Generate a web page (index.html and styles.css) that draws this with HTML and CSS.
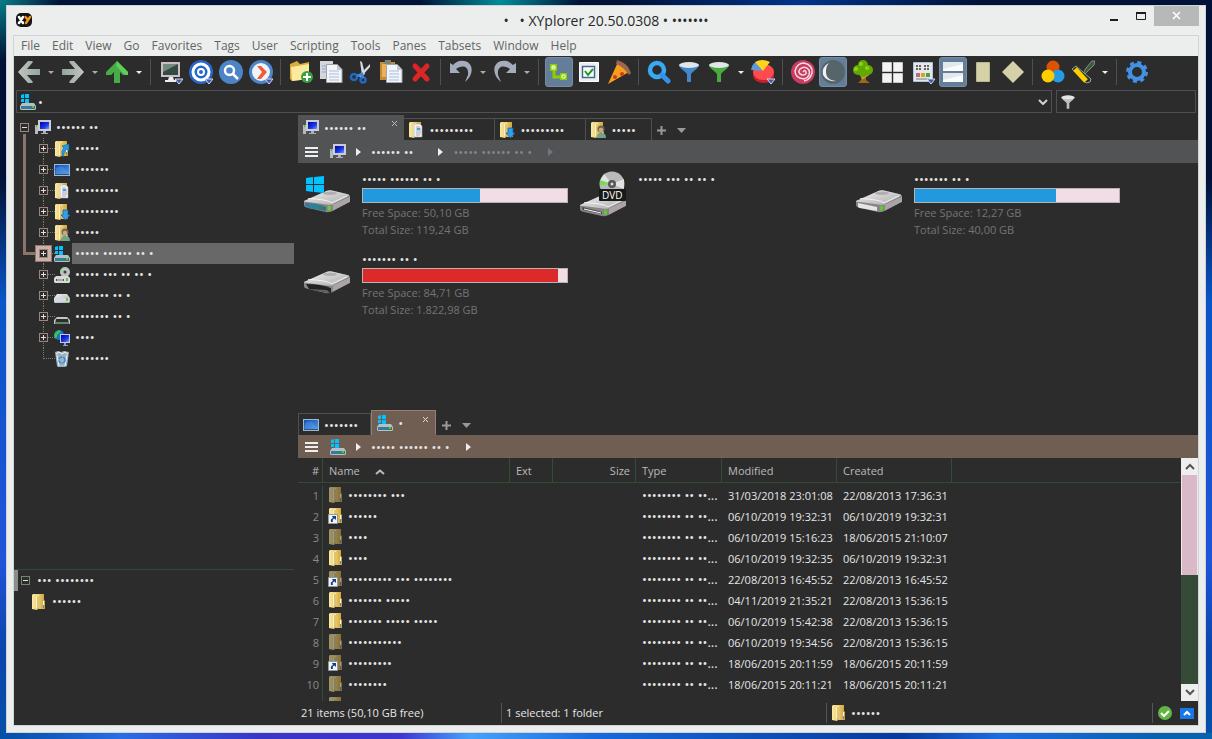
FILE: index.html
```html
<!DOCTYPE html>
<html lang="en">
<head>
    <meta charset="UTF-8">
    <meta name="viewport" content="width=device-width, initial-scale=1.0">
    <title>XYplorer 20.50.0308</title>
    <link rel="stylesheet" href="styles.css">
</head>
<body>
    <!-- icon set -->
    <svg class="defs" width="0" height="0" aria-hidden="true">
        <defs>
            <linearGradient id="gFolder" x1="0" x2="1"><stop offset="0" stop-color="#fbe9a4"/><stop offset=".5" stop-color="#e9cb6c"/><stop offset="1" stop-color="#cf9f38"/></linearGradient>
            <linearGradient id="gScreen" x1="0" y1="0" x2="1" y2="1"><stop offset="0" stop-color="#0000a0"/><stop offset=".6" stop-color="#1a3be8"/><stop offset="1" stop-color="#6aa0ff"/></linearGradient>
            <linearGradient id="gDesk" x1="0" y1="0" x2="1" y2="1"><stop offset="0" stop-color="#174bb0"/><stop offset="1" stop-color="#4f9bea"/></linearGradient>
            <linearGradient id="gMetal" x1="0" y1="0" x2="1" y2="1"><stop offset="0" stop-color="#f4f4f4"/><stop offset="1" stop-color="#a9a9ab"/></linearGradient>
            <linearGradient id="gTeal" x1="0" x2="1"><stop offset="0" stop-color="#3a78a0"/><stop offset=".6" stop-color="#2b8294"/><stop offset="1" stop-color="#3a6f70"/></linearGradient>
            <linearGradient id="gArrow" x1="0" x2="1"><stop offset="0" stop-color="#c4c4c4"/><stop offset="1" stop-color="#8fa899"/></linearGradient>
        </defs>
        <symbol id="folder" viewBox="0 0 16 16"><path d="M1 1l1-1h11v6l1 1v8h-7l-1 1-5-1z" fill="url(#gFolder)"/><path d="M5 2l3-1v12l-2 2-1-2z" fill="#fff3bd"/><path d="M7 2v13" stroke="#bb9238"/><rect x="12" y="7" width="1" height="4" fill="#fff"/><rect x="12" y="11" width="1" height="3" fill="#3e8fd0"/></symbol>
        <symbol id="pc" viewBox="0 0 16 16"><path d="M0 5h3v9H0z" fill="#b9b9b9"/><path d="M1 5h1v2H1z" fill="#2fd020"/><path d="M3 0h13v11H3z" fill="#cfcbd6"/><path d="M5 2h9v7H5z" fill="url(#gScreen)"/><path d="M8 11h3v2h2v1H6v-1h2z" fill="#aeaeb4"/></symbol>
        <symbol id="quick" viewBox="0 0 16 16"><use href="#folder"/><path d="M8 5l7-2v7l-2-2c-2 2-3 4-4 8-2-4-1-7 1-9z" fill="#1f9ae4" stroke="#0b63b0" stroke-width=".6"/></symbol>
        <symbol id="desktop" viewBox="0 0 16 16"><path d="M0 2h16v12H0z" fill="#9fb6cf"/><path d="M1 3h14v9H1z" fill="url(#gDesk)"/><path d="M2 6q6-4 9 1t4 3v2H2z" fill="#5fa7f2" opacity=".35"/><path d="M1 12h14v1H1z" fill="#34536e"/></symbol>
        <symbol id="docs" viewBox="0 0 16 16"><use href="#folder"/><path d="M6 2h6l2 2v11H6z" fill="#f1f3f6" stroke="#a8a8a8" stroke-width=".6"/><path d="M8 5h4M8 7h5M8 9h5M8 11h5M8 13h4" stroke="#a494a5" stroke-width=".8"/><rect x="9" y="6" width="3" height="2" fill="#43a4dd"/></symbol>
        <symbol id="down" viewBox="0 0 16 16"><use href="#folder"/><path d="M9 6h5v5h2l-4.500 5L7 11h2z" fill="#369ee5" stroke="#1265ad" stroke-width=".8"/></symbol>
        <symbol id="users" viewBox="0 0 16 16"><use href="#folder"/><path d="M7 16q0-5 3-5h2q4 0 4 5z" fill="#6fa58b"/><circle cx="11" cy="7" r="3.500" fill="#73654d"/><circle cx="11" cy="8" r="2.300" fill="#c9a885"/></symbol>
        <symbol id="drive" viewBox="0 0 16 16"><path d="M3 6h10l3 4v4l-1 1H1l-1-1v-4z" fill="url(#gMetal)"/><path d="M1 10h14v4H1z" fill="#cfd8e4"/><path d="M12 10h2v3h-2z" fill="#6fcb2d"/></symbol>
        <symbol id="removable" viewBox="0 0 16 16"><path d="M3 8h10l3 3v4H0v-4z" fill="#c4c4c2"/><path d="M2 10h12l1 5H1z" fill="#263327"/><path d="M1 13h14v2H1z" fill="#69836a"/></symbol>
        <symbol id="windrive" viewBox="0 0 16 16"><path d="M2 9h12l2 3v3l-1 1H1l-1-1v-3z" fill="#b9bec2"/><path d="M1 12h14v3H1z" fill="url(#gTeal)"/><path d="M12 12h2v2h-2z" fill="#4fcb2d"/><path d="M1 1l3-1v4H1zM5 0h4v4H5zM1 5h3v3H1zM5 5h4v4H5z" fill="#00c3ff"/></symbol>
        <symbol id="dvd" viewBox="0 0 16 16"><circle cx="11" cy="5" r="5" fill="#bfc3c0"/><path d="M11 5L7 2 6 5z" fill="#93d69b"/><circle cx="11" cy="5" r="1.500" fill="#3b3b3b"/><path d="M2 9h12l2 2v4l-1 1H1l-1-1v-4z" fill="#d8d8da"/><path d="M2 12h8v2H2z" fill="#555"/><path d="M3 12.500h6v1H3z" fill="#fff"/><path d="M12 11h2v3h-2z" fill="#5ec72b"/></symbol>
        <symbol id="network" viewBox="0 0 16 16"><circle cx="5" cy="5" r="5" fill="#1673d8"/><path d="M1 3l4-3 2 2-3 2-2 5-2-3zM6 6l3-2 1 2-3 3z" fill="#3ec832"/><path d="M6 4h10v9H6z" fill="#c7cae0"/><path d="M7 5h8v7H7z" fill="url(#gScreen)"/><path d="M10 13h2v2h2v1H9v-1h1z" fill="#8f9fc0"/></symbol>
        <symbol id="bin" viewBox="0 0 16 16"><path d="M1 1l3-1 3 1 3-1 5 1-2 14-2 1H4l-1-1z" fill="#b6cad9" opacity=".85"/><path d="M2 3l3-2 3 2 3-2 3 2M3 4l2 11M13 4l-2 11" stroke="#eef6fb" fill="none"/><circle cx="8" cy="9" r="3" fill="none" stroke="#3e8be0" stroke-width="1.500" stroke-dasharray="4 1"/></symbol>
        <symbol id="link" viewBox="0 0 16 16"><path d="M.5 6.500h9v9h-9z" fill="#f2f5f8" stroke="#9298a0"/><path d="M3 14q-1-3 2-4L4 8h4v4L6.500 10.500Q4 11 5 14z" fill="#153f8c"/></symbol>
        <symbol id="cone" viewBox="0 0 24 24"><path d="M2 5c0 3 6 6 8 9v8h4v-8c2-3 8-6 8-9z" fill="currentColor"/><ellipse cx="12" cy="5" rx="10" ry="3" fill="#dfe5e8"/></symbol>
        <symbol id="flag" viewBox="0 0 24 24"><path d="M16 19h8l-4 5z" fill="#385ca8" stroke="#e1d6ef"/></symbol>
        <symbol id="drivebig" viewBox="0 0 48 28" preserveAspectRatio="none"><path d="M1 14L24 2q3-1 6 0l15 4q2 1 2 3v6L29 26q-2 1-5 1L4 22q-3-1-3-3z" fill="#8b8588"/><path d="M1 14L24 2q3-1 6 0l15 4q2 1 1 2L29 18q-2 1-5 0L3 15q-2 0-2-1z" fill="url(#gMetal)"/><path d="M30 18L47 9v6L30 25z" fill="#aaa4a6"/><path d="M5 11q18 1 24 5l15-8" fill="none" stroke="#fff" stroke-width=".8"/><ellipse cx="27" cy="5" rx="7" ry="2" fill="#b3afb1"/><path d="M25 20h3v5h-3z" fill="#55d026"/></symbol>
    </svg>

    <div class="window">
        <header class="titlebar">
            <svg class="logo" width="16" height="16" viewBox="0 0 16 16"><rect y="1" width="16" height="14" rx="5" fill="#151515"/><path d="M3 5l4 6M7 5l-4 6" stroke="#fff" stroke-width="2.500" stroke-linecap="round"/><path d="M9.500 5l2.500 3M14 5l-4 6" stroke="#f39a17" stroke-width="2.300" stroke-linecap="round" fill="none"/></svg>
            <h1>•&nbsp; &nbsp;• XYplorer 20.50.0308 • •••••••</h1>
            <div class="controls">
                <button aria-label="Minimize"><svg width="12" height="12"><path d="M2 9h8v2H2z" fill="#1e1e1e"/></svg></button>
                <button aria-label="Maximize"><svg width="12" height="12"><path d="M1.500 2.500v7h9v-7z" fill="none" stroke="#1e1e1e"/><path d="M1 2h10v2H1z" fill="#1e1e1e"/></svg></button>
                <button class="close" aria-label="Close"><svg width="10" height="10"><path d="M1 1l7 7M8 1L1 8" stroke="#fff" stroke-width="1.500"/></svg></button>
            </div>
        </header>

        <div class="app">
            <nav class="menu">
                <a href="#">File</a><a href="#">Edit</a><a href="#">View</a><a href="#">Go</a><a href="#">Favorites</a><a href="#">Tags</a><a href="#">User</a><a href="#">Scripting</a><a href="#">Tools</a><a href="#">Panes</a><a href="#">Tabsets</a><a href="#">Window</a><a href="#">Help</a>
            </nav>

            <div class="toolbar">
                <button aria-label="Back"><svg viewBox="0 0 24 24"><path d="M1 12L11 1h4l1 1-6 7h13v6H10l6 7-1 1h-4z" fill="url(#gArrow)"/></svg></button>
                <button class="caret" aria-label="Back history"></button>
                <button aria-label="Forward"><svg viewBox="0 0 24 24"><path transform="matrix(-1 0 0 1 24 0)" d="M1 12L11 1h4l1 1-6 7h13v6H10l6 7-1 1h-4z" fill="url(#gArrow)"/></svg></button>
                <button class="caret" aria-label="Forward history"></button>
                <button aria-label="Up"><svg viewBox="0 0 24 24"><path d="M12 1L1 12v3h5l3-3v11h6V12l3 3h5v-3z" fill="#46ad46"/><path d="M12 1l11 11v3h-3L11 6z" fill="#62cc5a"/></svg></button>
                <button class="caret light" aria-label="Up history"></button>
                <i class="sep"></i>
                <button aria-label="Computer"><svg viewBox="0 0 24 24"><path d="M2 2h19v15H2z" fill="#cbbfc6"/><path d="M4 4h15v11H4z" fill="#344b45"/><path d="M4 4h15L4 12z" fill="#758a7f"/><path d="M10 17h4l1 3H9zM6 20h11v2H6z" fill="#eee"/><use href="#flag"/></svg></button>
                <button aria-label="Hotlist"><svg viewBox="0 0 24 24"><circle cx="12" cy="12" r="12" fill="#2767c9"/><circle cx="12" cy="12" r="8" fill="none" stroke="#fff" stroke-width="3"/><circle cx="12" cy="12" r="3" fill="none" stroke="#fff" stroke-width="2"/><use href="#flag"/></svg></button>
                <button aria-label="Find"><svg viewBox="0 0 24 24"><circle cx="12" cy="12" r="12" fill="#4c84c8"/><circle cx="10.500" cy="10.500" r="4.500" fill="none" stroke="#fff" stroke-width="2.500"/><path d="M14 14l5 5" stroke="#fff" stroke-width="2.500"/></svg></button>
                <button aria-label="Go to"><svg viewBox="0 0 24 24"><circle cx="12" cy="12" r="12" fill="#4c84c8"/><circle cx="12" cy="12" r="9" fill="#eef3f8"/><path d="M8 6h4l6 6-6 7H8l5-7z" fill="#f05b31"/><use href="#flag"/></svg></button>
                <i class="sep"></i>
                <button aria-label="New folder"><svg viewBox="0 0 24 24"><path d="M1 4l7-3 3 3 9-2v17L3 21 1 19z" fill="#d9ac3c"/><path d="M2 7l18-3v15L3 21z" fill="#fbea9e"/><circle cx="18" cy="17" r="6" fill="#39a141"/><path d="M18 13v8M14 17h8" stroke="#fff" stroke-width="2"/></svg></button>
                <button aria-label="Copy"><svg viewBox="0 0 24 24"><path d="M1 1h13v18H1z" fill="#d3d7db"/><path d="M3 6h7M3 9h7M3 12h7" stroke="#8fa7cc"/><path d="M7.500 4.500H18l5 5v13H7.500z" fill="#f4f5f7" stroke="#a2a3a6"/><path d="M18 4v6h5" fill="#c3c8ce"/><path d="M10 11h10M10 14h10M10 17h10M10 20h10" stroke="#a5bfe3"/></svg></button>
                <button aria-label="Cut"><svg viewBox="0 0 24 24"><path d="M11 1l2 1 3 12-3 2zM21 4v3l-9 10-3-1z" fill="#d7dce2"/><circle cx="5" cy="17" r="3" fill="none" stroke="#2368c0" stroke-width="2.500"/><circle cx="14" cy="20" r="2.500" fill="none" stroke="#2368c0" stroke-width="2.500"/><path d="M8 16l5-2 1 4" fill="none" stroke="#3a86d8" stroke-width="2.500"/></svg></button>
                <button aria-label="Paste"><svg viewBox="0 0 24 24"><path d="M1 2h15v18H1z" fill="#c58a3a"/><path d="M3 4h11v13H3z" fill="#eab05a"/><path d="M6 0h6v4H5z" fill="#798378"/><path d="M7.500 4.500H18l5 5v13H7.500z" fill="#f4f5f7" stroke="#a2a3a6"/><path d="M18 4v6h5" fill="#c3c8ce"/><path d="M10 11h10M10 14h10M10 17h10M10 20h10" stroke="#a5bfe3"/></svg></button>
                <button aria-label="Delete"><svg viewBox="0 0 24 24"><path d="M6 6l12 13M18 6L6 19" stroke="#dc2525" stroke-width="5" stroke-linecap="round"/></svg></button>
                <i class="sep"></i>
                <button aria-label="Undo"><svg viewBox="0 0 24 24"><path d="M1 3v10h10L7 9c8-5 13-2 12 6l-3 7c10-8 8-20-1-21-5-1-8 1-11 4z" fill="#a4adbb"/></svg></button>
                <button class="caret" aria-label="Undo list"></button>
                <button aria-label="Redo"><svg viewBox="0 0 24 24"><path transform="matrix(-1 0 0 1 24 0)" d="M1 3v10h10L7 9c8-5 13-2 12 6l-3 7c10-8 8-20-1-21-5-1-8 1-11 4z" fill="#a4adbb"/></svg></button>
                <button class="caret" aria-label="Redo list"></button>
                <i class="sep"></i>
                <button class="on" aria-label="Mini tree"><svg viewBox="0 0 24 24"><path d="M7 9v8h7" fill="none" stroke="#8cce00" stroke-width="3"/><path d="M3 4h7v7H3zM13 13h7v7h-7z" fill="#8cce00"/><path d="M5 6h3v3H5zM15 15h3v3h-3z" fill="none" stroke="#f6ffe9"/><path d="M5 7h3" stroke="#fff"/></svg></button>
                <button aria-label="Checkboxes"><svg viewBox="0 0 24 24"><path d="M2.500 2.500h19v19h-19z" fill="#e9f0f5" stroke="#fff"/><path d="M5.500 6.500h12v11h-12z" fill="#fff" stroke="#47698c" stroke-width="1.500"/><path d="M8 11l3 4 5-6" fill="none" stroke="#189e1b" stroke-width="2"/></svg></button>
                <button aria-label="Pizza"><svg viewBox="0 0 24 24"><path d="M11 2l11 10-21 12z" fill="#f99d1c"/><path d="M10 0q11 3 14 13l-2 2Q17 7 9 4z" fill="#9b674d"/><circle cx="15" cy="14" r="2" fill="#ca3e1b"/><circle cx="8" cy="17" r="2" fill="#ca3e1b"/></svg></button>
                <i class="sep"></i>
                <button aria-label="Search"><svg viewBox="0 0 24 24"><circle cx="10" cy="10" r="7" fill="none" stroke="#38a9f5" stroke-width="4.500"/><path d="M15 15l6 6" stroke="#3490ed" stroke-width="5" stroke-linecap="round"/></svg></button>
                <button class="blue" aria-label="Filter"><svg><use href="#cone"/></svg></button>
                <button class="green" aria-label="Visual filter"><svg><use href="#cone"/></svg></button>
                <button class="caret light" aria-label="Filter list"></button>
                <button aria-label="Statistics"><svg viewBox="0 0 24 24"><path d="M2 11h21v6q-2 6-11 6-9-1-10-7z" fill="#c51f30"/><ellipse cx="12.500" cy="12" rx="10.500" ry="8" fill="#ff4b4b"/><path d="M12 11L0 10q1-6 5-8z" fill="#5c9bd6"/><path d="M12 11L4 2q7-4 15 0z" fill="#ffd31e"/><use href="#flag"/></svg></button>
                <i class="sep"></i>
                <button aria-label="Spiral"><svg viewBox="0 0 24 24"><circle cx="12" cy="12" r="12" fill="#c83c60"/><path d="M12 12q2-3 3 0t-4 3q-5-2-2-6 5-4 9 1 2 7-5 9-9-1-9-8 2-8 9-8 9 2 8 10-2 7-8 8" fill="none" stroke="#f6dce3" stroke-width="1.500"/></svg></button>
                <button class="on" aria-label="Dark mode"><svg viewBox="0 0 24 24"><circle cx="12" cy="12" r="12" fill="#56656a"/><path d="M8 3q-8 4-6 12 4 7 13 6Q4 20 5 10q0-4 3-7z" fill="#f2f2f2"/></svg></button>
                <button aria-label="Folder tree"><svg viewBox="0 0 24 24"><path d="M10 13h5v7l4 3H7l3-3z" fill="#9a691c"/><path d="M9 14l3 4 6-4" fill="none" stroke="#d79a32" stroke-width="2"/><g fill="#60a900"><circle cx="7" cy="10" r="5"/><circle cx="17" cy="10" r="5"/><circle cx="12" cy="5" r="5"/><circle cx="12" cy="13" r="4"/></g><g fill="#8fd117"><circle cx="10" cy="4" r="2"/><circle cx="5" cy="9" r="2"/><circle cx="16" cy="8" r="2"/></g></svg></button>
                <button aria-label="Tiles"><svg viewBox="0 0 24 24"><path d="M1.500 2.500h9v9h-9zm11 0h9v9h-9zm-11 11h9v9h-9zm11 0h9v9h-9z" fill="#f4f4f4" stroke="#c7c7c7"/></svg></button>
                <button aria-label="Details"><svg viewBox="0 0 24 24"><path d="M2.500 2.500h19v19h-19z" fill="#e5e8eb" stroke="#b1c4d7"/><path d="M5 6h6M5 9h6M13 6h6M13 9h6" stroke="#626262" stroke-width="2" stroke-dasharray="2 1"/><path d="M5 13h4v4H5z" fill="#b96b83"/><path d="M10 13h4v4h-4z" fill="#d8a70b"/><path d="M15 13h4v4h-4z" fill="#47a34b"/><path d="M5 19h13" stroke="#777"/><use href="#flag"/></svg></button>
                <button class="on" aria-label="Dual pane"><svg viewBox="0 0 24 24"><path d="M2 2h20v9H2zM2 13h20v9H2z" fill="#e1e8ec"/><path d="M2 9l20-5v7H2zM2 20l20-5v7H2z" fill="#f9fbfc"/></svg></button>
                <button aria-label="Rectangle"><svg viewBox="0 0 24 24"><path d="M5.500 2.500h13v19h-13z" fill="#d6d2a8" stroke="#bab591"/></svg></button>
                <button aria-label="Diamond"><svg viewBox="0 0 24 24"><path d="M12 1l11 11-11 11L1 12z" fill="#d5d0a9"/></svg></button>
                <i class="sep"></i>
                <button aria-label="Color filters"><svg viewBox="0 0 24 24"><circle cx="12" cy="7" r="6.500" fill="#df5204"/><circle cx="17" cy="16" r="6.500" fill="#239be5"/><circle cx="7" cy="16" r="6.500" fill="#ffce00"/></svg></button>
                <button aria-label="Paint"><svg viewBox="0 0 24 24"><path d="M12 14l3-6 6-7h3l-1 4-5 5-4 4z" fill="#385a3b" stroke="#9aa298" stroke-width=".8"/><path d="M1 9l4-3 15 13-1 3-4 1z" fill="#233024" stroke="#9aa298"/><path d="M4 9l11 12" stroke="#ffcf00" stroke-width="5"/></svg></button>
                <button class="caret light" aria-label="Paint list"></button>
                <i class="sep"></i>
                <button aria-label="Configuration"><svg viewBox="0 0 24 24"><circle cx="12" cy="12" r="7" fill="none" stroke="#4391e4" stroke-width="4"/><circle cx="12" cy="12" r="9.500" fill="none" stroke="#4391e4" stroke-width="3" stroke-dasharray="4 3.460"/></svg></button>
            </div>

            <div class="address">
                <label class="field path"><svg class="ico"><use href="#windrive"/></svg><input type="text" value="•" aria-label="Address"><svg class="chev" width="10" height="6"><path d="M1 1l4 4 4-4" fill="none" stroke="#d4d4d4" stroke-width="2"/></svg></label>
                <label class="field filter"><svg class="ico"><use href="#cone"/></svg><input type="text" aria-label="Live filter"></label>
            </div>

            <main class="panes">
                <aside class="side">
                    <div class="tree">
                        <div class="node root"><button class="exp minus" aria-label="Collapse"></button><svg class="ico"><use href="#pc"/></svg><span>•••••• ••</span></div>
                        <ul>
                            <li class="node"><button class="exp" aria-label="Expand"></button><svg class="ico"><use href="#quick"/></svg><span>•••••</span></li>
                            <li class="node"><button class="exp" aria-label="Expand"></button><svg class="ico"><use href="#desktop"/></svg><span>•••••••</span></li>
                            <li class="node"><button class="exp" aria-label="Expand"></button><svg class="ico"><use href="#docs"/></svg><span>•••••••••</span></li>
                            <li class="node"><button class="exp" aria-label="Expand"></button><svg class="ico"><use href="#down"/></svg><span>•••••••••</span></li>
                            <li class="node"><button class="exp" aria-label="Expand"></button><svg class="ico"><use href="#users"/></svg><span>•••••</span></li>
                            <li class="node selected"><button class="exp" aria-label="Expand"></button><svg class="ico"><use href="#windrive"/></svg><span>••••• •••••• •• •</span></li>
                            <li class="node"><button class="exp" aria-label="Expand"></button><svg class="ico"><use href="#dvd"/></svg><span>••••• ••• •• •• •</span></li>
                            <li class="node"><button class="exp" aria-label="Expand"></button><svg class="ico"><use href="#drive"/></svg><span>••••••• •• •</span></li>
                            <li class="node"><button class="exp" aria-label="Expand"></button><svg class="ico"><use href="#removable"/></svg><span>••••••• •• •</span></li>
                            <li class="node"><button class="exp" aria-label="Expand"></button><svg class="ico"><use href="#network"/></svg><span>••••</span></li>
                            <li class="node last"><svg class="ico"><use href="#bin"/></svg><span>•••••••</span></li>
                        </ul>
                    </div>
                    <div class="catalog">
                        <div class="cat-head"><button class="exp minus" aria-label="Collapse"></button><span>••• ••••••••</span></div>
                        <div class="cat-item"><svg class="ico"><use href="#folder"/></svg><span>••••••</span></div>
                    </div>
                </aside>

                <div class="content">
                    <section class="pane top">
                        <div class="tabs">
                            <div class="tab active"><svg class="ico"><use href="#pc"/></svg><span>•••••• ••</span><button class="x" aria-label="Close tab"><svg width="7" height="7"><path d="M1 1l5 5M6 1L1 6" stroke="#bbb"/></svg></button></div>
                            <div class="tab"><svg class="ico"><use href="#docs"/></svg><span>•••••••••</span></div>
                            <div class="tab"><svg class="ico"><use href="#down"/></svg><span>•••••••••</span></div>
                            <div class="tab"><svg class="ico"><use href="#users"/></svg><span>•••••</span></div>
                            <button class="tabbtn" aria-label="New tab"><svg width="9" height="9"><path d="M4.500 0v9M0 4.500h9" stroke="#999" stroke-width="2"/></svg></button>
                            <button class="tabbtn" aria-label="Tab list"><svg width="9" height="5"><path d="M0 0h9L4.500 5z" fill="#999"/></svg></button>
                        </div>
                        <div class="crumbs">
                            <button class="burger" aria-label="Menu"></button>
                            <svg class="ico"><use href="#pc"/></svg><i class="arrow"></i><a class="wide" href="#">•••••• ••</a><i class="arrow"></i><a class="dim" href="#">••••• •••••• •• •</a><i class="arrow dim"></i>
                        </div>
                        <div class="drives">
                            <article class="disk">
                                <svg viewBox="0 0 48 48"><use href="#drivebig" y="18" width="48" height="24"/><path d="M2 32q12 0 21 4v4L5 37q-2-1-3-2z" fill="url(#gTeal)"/><path d="M25 35h2v4h-2z" fill="#53dc21"/><path d="M3 7l7-1v7H3zM11 6l10-1v8H11zM3 14h7v7l-7-1zM11 14h10v8l-10-1z" fill="#00c3ff"/></svg>
                                <div class="info"><h2>••••• •••••• •• •</h2><div class="bar"><i style="width:57.500%"></i></div><p>Free Space: 50,10 GB</p><p>Total Size: 119,24 GB</p></div>
                            </article>
                            <article class="disk">
                                <svg viewBox="0 0 48 48"><use href="#drivebig" y="22" width="48" height="24"/><path d="M3 36l20 5v2L4 39z" fill="#444"/><path d="M5 38l17 4" stroke="#fff"/><circle cx="33" cy="13" r="12.500" fill="#b9b9b9"/><path d="M33 13L21 10l4-7zM33 13l12-5v10z" fill="#e4e2e3"/><path d="M33 13L21 9v5z" fill="#70df4f"/><circle cx="33" cy="13" r="4" fill="#555"/><circle cx="33" cy="13" r="1.500" fill="#ddd"/><rect x="20" y="18" width="27" height="12" rx="1" fill="#171917"/><text x="23" y="28" fill="#fff" font-family="Open Sans, sans-serif" font-size="10">DVD</text></svg>
                                <div class="info"><h2>••••• ••• •• •• •</h2></div>
                            </article>
                            <article class="disk">
                                <svg viewBox="0 0 48 48"><use href="#drivebig" y="18" width="48" height="24"/><path d="M3 32l19 4v4L5 37q-2 0-2-2z" fill="#e6e4e5"/></svg>
                                <div class="info"><h2>••••••• •• •</h2><div class="bar"><i style="width:69%"></i></div><p>Free Space: 12,27 GB</p><p>Total Size: 40,00 GB</p></div>
                            </article>
                            <article class="disk">
                                <svg viewBox="0 0 48 48"><use href="#drivebig" y="19" width="48" height="24"/><path d="M3 33q15 0 25 4v5L6 38z" fill="#232323"/><path d="M6 38l18 1 3 3" fill="#59665a"/></svg>
                                <div class="info"><h2>••••••• •• •</h2><div class="bar full"><i style="width:95.500%"></i></div><p>Free Space: 84,71 GB</p><p>Total Size: 1.822,98 GB</p></div>
                            </article>
                        </div>
                    </section>

                    <section class="pane bottom">
                        <div class="tabs">
                            <div class="tab desk"><svg class="ico"><use href="#desktop"/></svg><span>•••••••</span></div>
                            <div class="tab active short"><svg class="ico"><use href="#windrive"/></svg><span>•</span><button class="x" aria-label="Close tab"><svg width="7" height="7"><path d="M1 1l5 5M6 1L1 6" stroke="#ddd"/></svg></button></div>
                            <button class="tabbtn" aria-label="New tab"><svg width="9" height="9"><path d="M4.500 0v9M0 4.500h9" stroke="#999" stroke-width="2"/></svg></button>
                            <button class="tabbtn" aria-label="Tab list"><svg width="9" height="5"><path d="M0 0h9L4.500 5z" fill="#999"/></svg></button>
                        </div>
                        <div class="crumbs">
                            <button class="burger" aria-label="Menu"></button>
                            <svg class="ico"><use href="#windrive"/></svg><i class="arrow"></i><a href="#">••••• •••••• •• •</a><i class="arrow"></i>
                        </div>
                        <div class="listing">
                            <div class="rows">
                                <table>
                                    <colgroup><col class="c-num"><col class="c-name"><col class="c-ext"><col class="c-size"><col class="c-type"><col class="c-date"><col class="c-date"><col></colgroup>
                                    <thead>
                                        <tr><th>#</th><th>Name<svg class="sort" width="10" height="6"><path d="M1 5l4-3.500L9 5" fill="none" stroke="#bbb" stroke-width="2"/></svg></th><th>Ext</th><th>Size</th><th>Type</th><th>Modified</th><th>Created</th><th></th></tr>
                                    </thead>
                                    <tbody>
                                        <tr class="faded"><td>1</td><td><svg class="ico"><use class="base" href="#folder"/></svg>•••••••• •••</td><td></td><td></td><td>•••••••• •• ••...</td><td>31/03/2018 23:01:08</td><td>22/08/2013 17:36:31</td><td></td></tr>
                                        <tr><td>2</td><td><svg class="ico"><use class="base" href="#folder"/><use href="#link"/></svg>••••••</td><td></td><td></td><td>•••••••• •• ••...</td><td>06/10/2019 19:32:31</td><td>06/10/2019 19:32:31</td><td></td></tr>
                                        <tr class="faded"><td>3</td><td><svg class="ico"><use class="base" href="#folder"/></svg>••••</td><td></td><td></td><td>•••••••• •• ••...</td><td>06/10/2019 15:16:23</td><td>18/06/2015 21:10:07</td><td></td></tr>
                                        <tr><td>4</td><td><svg class="ico"><use class="base" href="#folder"/></svg>••••</td><td></td><td></td><td>•••••••• •• ••...</td><td>06/10/2019 19:32:35</td><td>06/10/2019 19:32:31</td><td></td></tr>
                                        <tr class="faded"><td>5</td><td><svg class="ico"><use class="base" href="#folder"/><use href="#link"/></svg>••••••••• ••• ••••••••</td><td></td><td></td><td>•••••••• •• ••...</td><td>22/08/2013 16:45:52</td><td>22/08/2013 16:45:52</td><td></td></tr>
                                        <tr><td>6</td><td><svg class="ico"><use class="base" href="#folder"/></svg>••••••• •••••</td><td></td><td></td><td>•••••••• •• ••...</td><td>04/11/2019 21:35:21</td><td>22/08/2013 15:36:15</td><td></td></tr>
                                        <tr><td>7</td><td><svg class="ico"><use class="base" href="#folder"/></svg>••••••• ••••• •••••</td><td></td><td></td><td>•••••••• •• ••...</td><td>06/10/2019 15:42:38</td><td>22/08/2013 15:36:15</td><td></td></tr>
                                        <tr class="faded"><td>8</td><td><svg class="ico"><use class="base" href="#folder"/></svg>•••••••••••</td><td></td><td></td><td>•••••••• •• ••...</td><td>06/10/2019 19:34:56</td><td>22/08/2013 15:36:15</td><td></td></tr>
                                        <tr class="faded"><td>9</td><td><svg class="ico"><use class="base" href="#folder"/><use href="#link"/></svg>•••••••••</td><td></td><td></td><td>•••••••• •• ••...</td><td>18/06/2015 20:11:59</td><td>18/06/2015 20:11:59</td><td></td></tr>
                                        <tr class="faded"><td>10</td><td><svg class="ico"><use class="base" href="#folder"/></svg>••••••••</td><td></td><td></td><td>•••••••• •• ••...</td><td>18/06/2015 20:11:21</td><td>18/06/2015 20:11:21</td><td></td></tr>
                                        <tr class="faded"><td></td><td><svg class="ico"><use class="base" href="#folder"/></svg></td><td></td><td></td><td></td><td></td><td></td><td></td></tr>
                                    </tbody>
                                </table>
                            </div>
                            <div class="scroll">
                                <button aria-label="Scroll up"><svg width="10" height="7"><path d="M1 6l4-4 4 4" fill="none" stroke="#555" stroke-width="2"/></svg></button>
                                <div class="track"><div class="thumb"></div></div>
                                <button aria-label="Scroll down"><svg width="10" height="7"><path d="M1 1l4 4 4-4" fill="none" stroke="#555" stroke-width="2"/></svg></button>
                            </div>
                        </div>
                    </section>
                </div>
            </main>

            <footer class="status">
                <span class="count">21 items (50,10 GB free)</span>
                <span class="picked">1 selected: 1 folder</span>
                <span class="where"><svg class="ico"><use href="#folder"/></svg>••••••</span>
                <span class="flags">
                    <svg width="14" height="14"><circle cx="7" cy="7" r="7" fill="#63b445"/><path d="M3 7l3 3 5-5" fill="none" stroke="#fff" stroke-width="2"/></svg>
                    <button aria-label="Toggle panel"><svg width="14" height="11"><path d="M0 0h14v11H0z" fill="#1877e8"/><path d="M4 7l3-3 3 3" fill="none" stroke="#fff" stroke-width="2"/></svg></button>
                </span>
            </footer>
        </div>
    </div>
</body>
</html>
```

FILE: styles.css
```css
* {
    margin: 0;
    padding: 0;
    box-sizing: border-box;
}

body {
    height: 100vh;
    padding: 5px 6px 6px;
    overflow: hidden;
    font-family: "Open Sans", "Noto Sans", sans-serif;
    font-size: 11px;
    color: #e6e6e6;
    background:
        radial-gradient(circle at 0 0, #087d88, transparent 60px),
        radial-gradient(circle at 500px 0, #008e99, transparent 80px),
        radial-gradient(circle at 800px 0, #00338c, transparent 180px),
        linear-gradient(90deg, transparent 10px, #2a6de5 120px, #3936c6 260px, #3f35d0 400px, #46a2fb 470px, #1769dc 600px, #073b9c 900px, #1c6ce0 1000px, #0862ae 1160px) 0 100% / 100% 6px no-repeat,
        linear-gradient(#001237 180px, #0a55c8 300px, #2054d9 560px, #0b45ad 650px, #0551a9);
}

button {
    border: 0;
    background: none;
    color: inherit;
    font: inherit;
}

a {
    color: inherit;
    text-decoration: none;
}

ul {
    list-style: none;
}

.defs {
    position: absolute;
}

.ico {
    width: 16px;
    height: 16px;
    flex: none;
}

/* window frame */
.window {
    display: flex;
    flex-direction: column;
    height: 100%;
    padding: 0 6px 6px;
    background: #ebeeed;
    border: 1px solid #d0d4d6;
}

.titlebar {
    display: grid;
    grid-template-columns: 135px 1fr 135px;
    height: 29px;
    color: #282828;
}

.logo {
    margin: 6px 3px;
}

.titlebar h1 {
    font-size: 14px;
    font-weight: 400;
    line-height: 29px;
    text-align: center;
    white-space: nowrap;
}

.controls {
    display: flex;
    justify-content: flex-end;
    align-items: flex-start;
}

.controls button {
    display: grid;
    place-items: center;
    width: 27px;
    height: 20px;
}

.controls .close {
    width: 45px;
    background: #b7b9b9;
}

.app {
    display: flex;
    flex-direction: column;
    flex: 1;
    min-height: 0;
    background: #2c2c2c;
    border: 1px solid #d0d4d4;
}

.menu {
    display: flex;
    gap: 12px;
    height: 20px;
    padding-left: 7px;
    flex: none;
    background: #ebeeed;
    color: #646464;
    font-size: 12px;
    line-height: 20px;
}

/* toolbar */
.toolbar {
    display: flex;
    height: 34px;
    padding-top: 1px;
    flex: none;
}

.toolbar button {
    display: grid;
    place-items: center;
    width: 28px;
    height: 30px;
    margin: 0 1px;
    flex: none;
}

.toolbar button svg {
    width: 24px;
    height: 24px;
}

.toolbar button.on {
    background: #647e9a;
    border: 1px solid #768da6;
    border-radius: 3px;
}

.toolbar .caret {
    width: 14px;
    margin: 0;
}

.toolbar .caret::before {
    content: "";
    border: 3px solid transparent;
    border-top-color: #aaa;
    border-bottom: 0;
}

.toolbar .light::before {
    border-top-color: #eee;
}

.sep {
    width: 1px;
    height: 26px;
    margin: 2px 5px 0 4px;
    background: #505050;
}

.blue {
    color: #4287ca;
}

.green {
    color: #49aa3d;
}

.address {
    display: flex;
    gap: 4px;
    padding: 0 2px;
    flex: none;
}

.field {
    display: flex;
    align-items: center;
    height: 23px;
    padding: 0 3px;
    border: 1px solid #505050;
    color: #bebebe;
}

.path {
    flex: 1;
}

.filter {
    width: 140px;
}

.field input {
    flex: 1;
    min-width: 0;
    padding-left: 2px;
    border: 0;
    outline: 0;
    background: none;
    color: #e6e6e6;
    font-family: inherit;
    font-size: 13px;
}

.panes {
    display: grid;
    grid-template-columns: 284px minmax(0, 1fr);
    flex: 1;
    min-height: 0;
    padding-top: 1px;
    font-size: 13px;
}

/* folder tree */
.side {
    display: flex;
    flex-direction: column;
    min-height: 0;
}

.tree {
    flex: 1;
    min-height: 0;
    padding: 3px 4px 0 6px;
}

.node {
    position: relative;
    display: flex;
    align-items: center;
    height: 21px;
}

.node span {
    flex: 1;
    padding-left: 5px;
    line-height: 21px;
}

.tree ul {
    position: relative;
}

/* thick line from the root to the current folder */
.tree ul::before {
    content: "";
    position: absolute;
    left: 3px;
    top: -4px;
    width: 10px;
    height: 118px;
    border: solid #8a756d;
    border-width: 0 0 3px 3px;
}

.tree li {
    padding-left: 19px;
}

.tree li::before {
    content: "";
    position: absolute;
    left: 23px;
    top: 0;
    width: 11px;
    height: 21px;
    border-left: 1px dotted #70856f;
    background: linear-gradient(90deg, #70856f 50%, transparent 50%) 0 10px / 2px 1px repeat-x;
}

.tree li.last::before {
    height: 11px;
}

.exp {
    position: relative;
    width: 9px;
    height: 9px;
    flex: none;
    border: 1px solid #9b857c;
    background:
        linear-gradient(#ddd, #ddd) center / 5px 1px no-repeat,
        linear-gradient(#ddd, #ddd) center / 1px 5px no-repeat,
        #2c2c2c;
}

.exp.minus {
    background: linear-gradient(#ddd, #ddd) center / 5px 1px no-repeat;
}

.tree .ico {
    margin-left: 6px;
}

.tree .last .ico {
    margin-left: 15px;
}

.selected span {
    margin-left: 2px;
    padding-left: 3px;
    background: #686868;
}

.selected .exp {
    box-shadow: 0 0 0 3px #ccb1aa, 0 0 0 4px #92776e;
}

.catalog {
    height: 134px;
    flex: none;
    margin-right: 4px;
    border-top: 1px solid #334a35;
}

.cat-head,
.cat-item {
    display: flex;
    align-items: center;
    height: 21px;
    line-height: 21px;
}

.cat-head {
    gap: 7px;
    padding-left: 3px;
    border-left: 4px solid #8c8c8e;
}

.cat-head .exp {
    border-color: #718670;
}

.cat-item {
    gap: 5px;
    padding-left: 17px;
}

/* panes */
.content {
    display: grid;
    grid-template-rows: minmax(0, 1fr) minmax(0, 1fr);
    gap: 3px;
    min-height: 0;
}

.pane {
    display: flex;
    flex-direction: column;
    min-height: 0;
}

.tabs {
    display: flex;
    align-items: flex-end;
    height: 26px;
    flex: none;
}

.tab {
    display: flex;
    align-items: center;
    gap: 5px;
    height: 22px;
    padding: 0 21px 0 4px;
    border: 1px solid #505050;
    border-width: 1px 1px 0 0;
}

.tab:last-of-type {
    padding-right: 15px;
}

.tab.active {
    position: relative;
    height: 25px;
    padding: 0 38px 0 5px;
    border: 0;
    background: #525355;
}

.x {
    position: absolute;
    top: 5px;
    right: 6px;
    display: flex;
}

.tabbtn {
    display: grid;
    place-items: center;
    width: 20px;
    height: 20px;
}

.tab.desk {
    padding: 0 12px 0 4px;
    border-left-width: 1px;
}

.bottom .tab.short {
    width: 65px;
    padding: 0 5px;
    border: 1px solid #918077;
    border-bottom: 0;
    background: #705e53;
}

.crumbs {
    display: flex;
    align-items: center;
    height: 23px;
    padding-left: 7px;
    flex: none;
    background: #525355;
}

.bottom .crumbs {
    background: #705e53;
}

.bottom .tabs {
    height: 25px;
}

.burger {
    width: 13px;
    height: 10px;
    margin-right: 12px;
    background: linear-gradient(#eee 2px, transparent 2px) 0 0 / 100% 4px;
}

.arrow {
    margin: 0 10px;
    border: 4px solid transparent;
    border-left: 5px solid #eee;
    border-right: 0;
}

.crumbs a + .arrow {
    margin-left: 16px;
}

.crumbs .wide + .arrow {
    margin-left: 25px;
}

.crumbs a.dim {
    color: #85858c;
}

.arrow.dim {
    border-left-color: #747486;
}

.drives {
    display: grid;
    grid-template-columns: repeat(auto-fill, 276px);
    grid-auto-rows: 80px;
    padding: 8px 0 0 5px;
}

.disk {
    display: flex;
    gap: 11px;
}

.disk > svg {
    width: 48px;
    height: 48px;
}

.info {
    width: 206px;
}

.info h2 {
    height: 17px;
    font-size: 13px;
    font-weight: 400;
    line-height: 17px;
}

.info p {
    color: #747474;
    font-size: 11px;
    line-height: 17px;
}

.bar {
    height: 15px;
    margin-bottom: 1px;
    border: 1px solid #b5b5b5;
    background: #f2dce5;
}

.bar i {
    display: block;
    height: 100%;
    background: #2299df;
}

.bar.full i {
    background: #dc2929;
}

/* file list */
.listing {
    display: flex;
    flex: 1;
    min-height: 0;
    padding-bottom: 2px;
}

.rows {
    flex: 1;
    min-width: 0;
    overflow: hidden;
}

table {
    width: 100%;
    table-layout: fixed;
    border-collapse: separate;
    border-spacing: 0;
}

.c-num { width: 25px; }
.c-name { width: 187px; }
.c-ext { width: 43px; }
.c-size { width: 83px; }
.c-type { width: 86px; }
.c-date { width: 115px; }

th {
    height: 25px;
    padding: 0 6px;
    border: solid #344b35;
    border-width: 0 1px 1px 0;
    color: #bababa;
    font-size: 11px;
    font-weight: 400;
    text-align: left;
}

th:last-child {
    border-right: 0;
}

th:nth-child(1),
th:nth-child(4),
td:nth-child(1) {
    padding: 0 3px 0 0;
    text-align: right;
}

th:nth-child(4) {
    padding-right: 5px;
}

.sort {
    margin-left: 15px;
}

td {
    height: 21px;
    padding: 0 0 0 6px;
    font-size: 13px;
    line-height: 21px;
    white-space: nowrap;
}

td .ico {
    margin-right: 4px;
    vertical-align: -3px;
}

td:nth-child(2) {
    padding-left: 5px;
}

td:nth-child(1) {
    border-right: 1px solid #344b35;
    color: #8a8a8a;
    font-size: 11px;
}

td:nth-child(6),
td:nth-child(7) {
    font-size: 11px;
}

tbody::before {
    content: "";
    display: table-row;
    height: 2px;
}

.faded .base {
    opacity: .55;
}

.scroll {
    display: flex;
    flex-direction: column;
    width: 17px;
}

.scroll button {
    display: grid;
    place-items: center;
    height: 17px;
    background: #eee;
}

.track {
    flex: 1;
    background: #354b37;
}

.thumb {
    height: 48%;
    border: 1px solid #efe7eb;
    border-width: 0 1px;
    background: #d9b8c7;
}

.status {
    display: grid;
    grid-template-columns: 488px 325px 1fr auto;
    height: 22px;
    flex: none;
    padding-bottom: 3px;
    line-height: 20px;
}

.status > span {
    border-right: 1px solid #555;
}

.status .count {
    padding-left: 287px;
}

.status .picked {
    padding-left: 4px;
}

.where {
    display: flex;
    align-items: center;
    gap: 4px;
    padding-left: 4px;
    font-size: 13px;
}

.status .flags {
    display: flex;
    align-items: center;
    gap: 8px;
    padding: 0 4px 0 5px;
    border: 0;
}

.flags button {
    display: flex;
}
```
